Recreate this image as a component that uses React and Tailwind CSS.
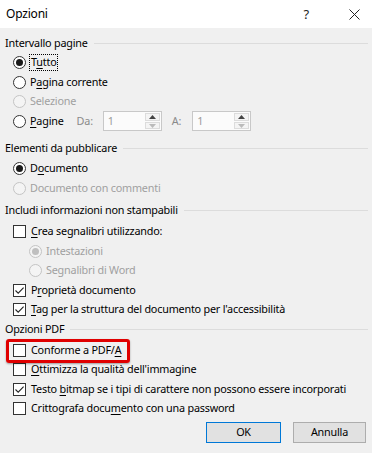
import React from "react";

const font = { fontFamily: '"Noto Sans", "Open Sans", sans-serif' };

function U({ children }) {
  return <span className="underline underline-offset-2">{children}</span>;
}

function Header({ children, className = "" }) {
  return (
    <div className={`flex items-center h-[20px] pl-[5px] ${className}`}>
      <span className="text-[#000] whitespace-nowrap">{children}</span>
      <div className="flex-1 h-px bg-[#dcdcdc] ml-[6px] mr-[4px]" />
    </div>
  );
}

function Radio({ checked, disabled, indent = false, className = "", children }) {
  const border = disabled ? "border-[#c4c4c4] bg-[#f4f4f4]" : "border-[#333] bg-white";
  const dot = disabled ? "bg-[#bfbfbf]" : "bg-[#1a1a1a]";
  return (
    <div className={`flex items-center h-[19.5px] ${indent ? "pl-[29px]" : "pl-[13px]"} ${className}`}>
      <div className={`w-[13px] h-[13px] rounded-full border flex items-center justify-center shrink-0 ${border}`}>
        {checked && <div className={`w-[7px] h-[7px] rounded-full ${dot}`} />}
      </div>
      <span className={`ml-[4px] whitespace-nowrap ${disabled ? "text-[#a0a0a0]" : "text-black"}`}>{children}</span>
    </div>
  );
}

function Check({ checked, className = "", children }) {
  return (
    <div className={`flex items-center h-[19.5px] pl-[13px] ${className}`}>
      <div className="w-[13px] h-[13px] border border-[#333] bg-white flex items-center justify-center shrink-0">
        {checked && (
          <svg width="11" height="11" viewBox="0 0 11 11">
            <path d="M1.5 5.5 L4.2 8.2 L9.6 2.6" fill="none" stroke="#222" strokeWidth="1.1" />
          </svg>
        )}
      </div>
      <span className="ml-[5px] whitespace-nowrap text-black">{children}</span>
    </div>
  );
}

function Spin() {
  return (
    <div className="flex h-[20px] w-[59px] border border-[#c8c8c8] bg-[#fbfbfb]">
      <div className="flex-1 pl-[4px] flex items-center text-[#9a9a9a]">1</div>
      <div className="w-[17px] flex flex-col p-px gap-px">
        <div className="flex-1 flex items-center justify-center border border-[#dcdcdc] bg-[#f4f4f4]">
          <svg width="7" height="4" viewBox="0 0 7 4"><path d="M0 4 L3.5 0 L7 4Z" fill="#444" /></svg>
        </div>
        <div className="flex-1 flex items-center justify-center border border-[#dcdcdc] bg-[#f4f4f4]">
          <svg width="7" height="4" viewBox="0 0 7 4"><path d="M0 0 L3.5 4 L7 0Z" fill="#bbb" /></svg>
        </div>
      </div>
    </div>
  );
}

export default function App() {
  return (
    <div className="w-[372px] h-[453px] bg-[#f0f0f0] text-[10.8px] tracking-[-0.2px] leading-none overflow-hidden" style={font}>
      <div className="h-[28px] bg-white flex items-center pl-[6px] pr-[12px]">
        <span className="text-black text-[12px]">Opzioni</span>
        <span className="ml-auto mr-[40px] text-[#222] text-[13px]">?</span>
        <svg width="11" height="11" viewBox="0 0 11 11">
          <path d="M0.5 0.5 L10.5 10.5 M10.5 0.5 L0.5 10.5" stroke="#222" strokeWidth="1" />
        </svg>
      </div>

      <Header className="mt-[5px]">Intervallo pagine</Header>
      <div className="flex items-center h-[19.5px] pl-[13px]">
        <div className="w-[13px] h-[13px] rounded-full border border-[#333] bg-white flex items-center justify-center shrink-0">
          <div className="w-[7px] h-[7px] rounded-full bg-[#1a1a1a]" />
        </div>
        <span className="ml-[3px] px-[1px] py-[2px] border border-dotted border-black text-black">
          T<U>u</U>tto
        </span>
      </div>
      <Radio>P<U>a</U>gina corrente</Radio>
      <Radio disabled>Selezione</Radio>
      <div className="flex items-center h-[19.5px]">
        <Radio>
          <U>P</U>agine
        </Radio>
        <span className="ml-[13px] text-[#8a8a8a]">Da:</span>
        <div className="ml-[10px]"><Spin /></div>
        <span className="ml-[10px] text-[#8a8a8a]">A:</span>
        <div className="ml-[11px]"><Spin /></div>
      </div>

      <Header className="mt-[7px]">Elementi da pubblicare</Header>
      <Radio checked className="mt-[1px]">D<U>o</U>cumento</Radio>
      <Radio disabled>Documento con commenti</Radio>

      <Header className="mt-[2px]">Includi informazioni non stampabili</Header>
      <Check className="mt-[2px]"><U>C</U>rea segnalibri utilizzando:</Check>
      <Radio disabled checked indent className="h-[18.5px]">Intestazioni</Radio>
      <Radio disabled indent className="h-[18.5px]">Segnalibri di Word</Radio>
      <Check checked>P<U>r</U>oprietà documento</Check>
      <Check checked><U>T</U>ag per la struttura del documento per l'accessibilità</Check>

      <Header>Opzioni PDF</Header>
      <div className="relative mt-[1px]">
        <Check>Conforme a PDF/<U>A</U></Check>
        <div className="absolute left-[6px] top-[-2px] w-[124px] h-[24px] border-[3px] border-[#e00000] rounded-[3px] shadow-[0_1px_2px_rgba(0,0,0,0.35)]" />
      </div>
      <Check><U>O</U>ttimizza la qualità dell'immagine</Check>
      <Check checked>Testo <U>b</U>itmap se i tipi di carattere non possono essere incorporati</Check>
      <Check>Crittografa docu<U>m</U>ento con una password</Check>

      <div className="flex justify-end gap-[12px] pr-[6px] mt-[3px]">
        <button className="w-[75px] h-[21px] bg-[#e1e1e1] border border-[#0078d7] text-black">OK</button>
        <button className="w-[73px] h-[21px] bg-[#e1e1e1] border border-[#adadad] text-black">Annulla</button>
      </div>
    </div>
  );
}
